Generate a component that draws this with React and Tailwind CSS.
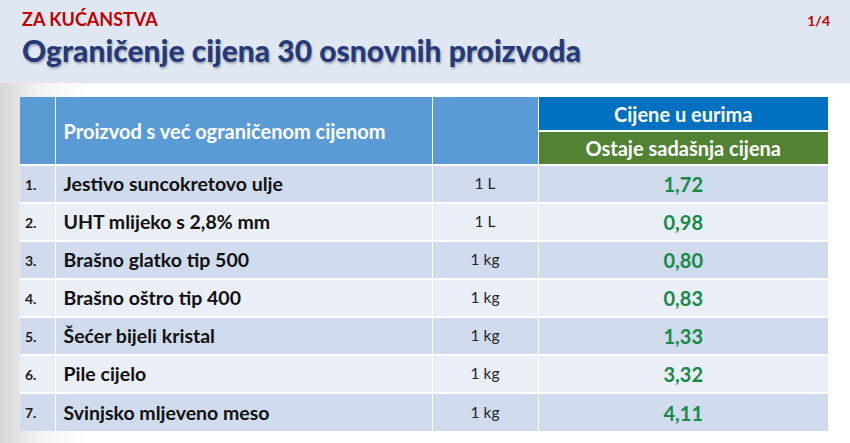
const rows = [
  { n: "1.", name: "Jestivo suncokretovo ulje", unit: "1 L", price: "1,72" },
  { n: "2.", name: "UHT mlijeko s 2,8% mm", unit: "1 L", price: "0,98" },
  { n: "3.", name: "Brašno glatko tip 500", unit: "1 kg", price: "0,80" },
  { n: "4.", name: "Brašno oštro tip 400", unit: "1 kg", price: "0,83" },
  { n: "5.", name: "Šećer bijeli kristal", unit: "1 kg", price: "1,33" },
  { n: "6.", name: "Pile cijelo", unit: "1 kg", price: "3,32" },
  { n: "7.", name: "Svinjsko mljeveno meso", unit: "1 kg", price: "4,11" },
];

export default function App() {
  return (
    <div className="h-[443px] w-[850px] overflow-hidden bg-[linear-gradient(to_right,#d6d6d6_0px,#f4f4f4_40px,#ffffff_90px)] font-['Lato',sans-serif]">
      {/* title band */}
      <div className="relative h-[83px] bg-[#dee7f2] px-[22px] pt-[8px]">
        <p className="text-[18px] font-bold leading-[22px] text-[#c00000]">ZA KUĆANSTVA</p>
        <h1 className="mt-[1px] text-[30px] font-black leading-[38px] text-[#263a7a] [text-shadow:1px_2px_2px_rgba(0,0,0,0.25)]">
          Ograničenje cijena 30 osnovnih proizvoda
        </h1>
        <span className="absolute right-[20px] top-[10px] text-[14px] font-bold text-[#c00000]">1/4</span>
      </div>

      <div className="pl-[20px] pt-[14px]">
        <table className="w-[808px] table-fixed border-collapse">
          <colgroup>
            <col className="w-[35px]" />
            <col className="w-[377px]" />
            <col className="w-[106px]" />
            <col className="w-[290px]" />
          </colgroup>
          <thead>
            <tr className="h-[34px]">
              <th rowSpan={2} className="border-r border-white bg-[#5b9bd5]" />
              <th
                rowSpan={2}
                className="border-x border-white bg-[#5b9bd5] pl-[8px] text-left text-[20px] font-bold text-white"
              >
                Proizvod s već ograničenom cijenom
              </th>
              <th rowSpan={2} className="border-x border-white bg-[#5b9bd5]" />
              <th className="border-b-2 border-white bg-[#0070c0] text-center text-[20px] font-bold text-white">
                Cijene u eurima
              </th>
            </tr>
            <tr className="h-[34px]">
              <th className="bg-[#548235] text-center text-[20px] font-bold text-white">Ostaje sadašnja cijena</th>
            </tr>
          </thead>
          <tbody>
            {rows.map((r, i) => (
              <tr key={r.n} className={`h-[38px] ${i % 2 === 0 ? "bg-[#d0dcee]" : "bg-[#e9eef7]"}`}>
                <td className="border-t-2 border-r border-white pl-[5px] text-[14px] font-bold text-[#1a1a1a]">{r.n}</td>
                <td className="border-t-2 border-x border-white pl-[8px] text-[19.5px] font-bold text-[#111]">{r.name}</td>
                <td className="border-t-2 border-x border-white text-center text-[15.5px] text-[#222]">{r.unit}</td>
                <td className="border-t-2 border-l border-white text-center text-[20px] font-bold text-[#178a48]">
                  {r.price}
                </td>
              </tr>
            ))}
          </tbody>
        </table>
      </div>
    </div>
  );
}
